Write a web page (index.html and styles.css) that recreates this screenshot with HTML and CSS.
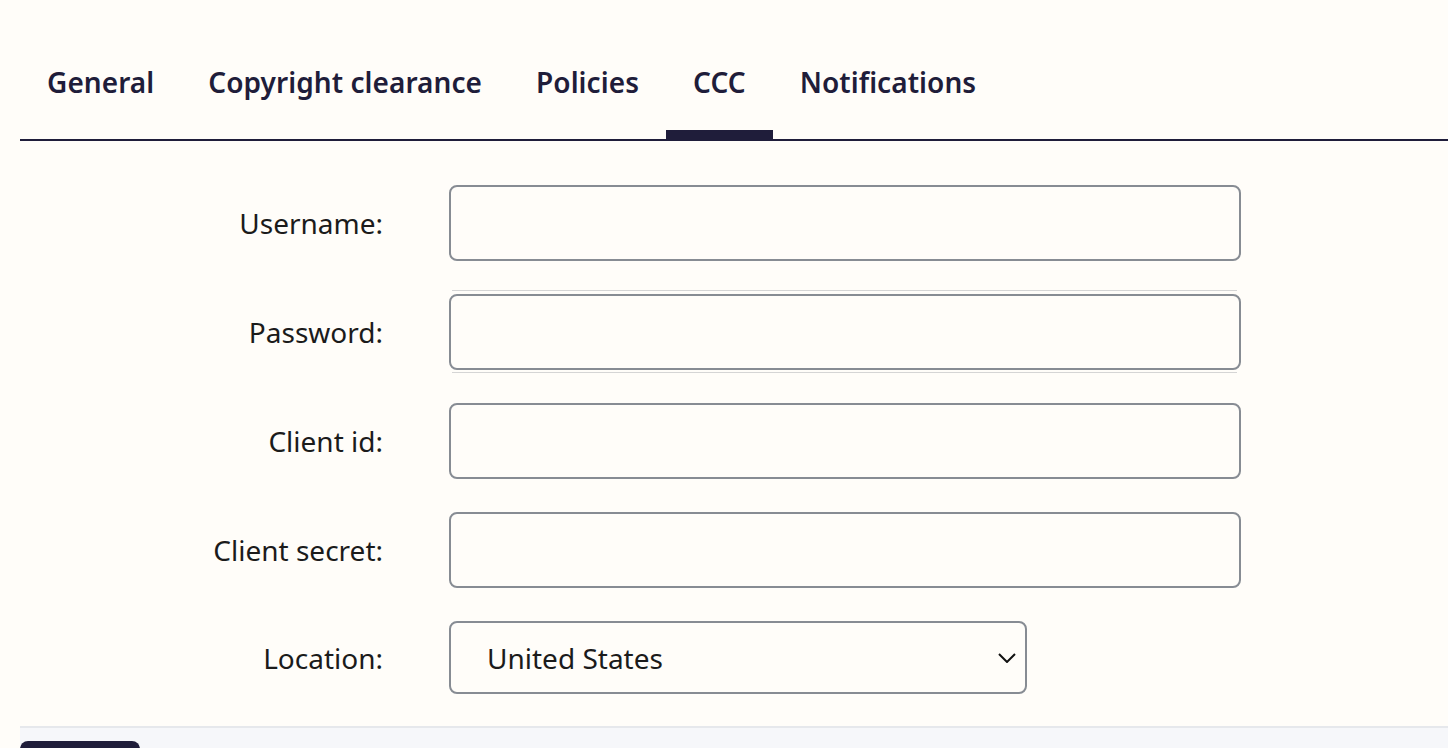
FILE: index.html
```html
<!DOCTYPE html>
<html lang="en">
<head>
<meta charset="utf-8">
<link rel="stylesheet" href="styles.css">
</head>
<body>
<div class="page">
  <nav class="tabs">
    <a class="tab">General</a>
    <a class="tab">Copyright clearance</a>
    <a class="tab">Policies</a>
    <a class="tab active">CCC</a>
    <a class="tab">Notifications</a>
  </nav>
  <form class="form">
    <div class="row">
      <label class="label">Username:</label>
      <div class="field"><input class="input" type="text"></div>
    </div>
    <div class="row">
      <label class="label">Password:</label>
      <div class="field pw"><input class="input" type="password"></div>
    </div>
    <div class="row">
      <label class="label">Client id:</label>
      <div class="field"><input class="input" type="text"></div>
    </div>
    <div class="row">
      <label class="label">Client secret:</label>
      <div class="field"><input class="input" type="text"></div>
    </div>
    <div class="row">
      <label class="label">Location:</label>
      <div class="select">
        <span class="select-text">United States</span>
        <svg class="chev" width="18" height="10" viewBox="0 0 18 10"><path d="M1 1l8 8 8-8" fill="none" stroke="#111" stroke-width="2"/></svg>
      </div>
    </div>
  </form>
  <div class="footer">
    <div class="btn"></div>
  </div>
</div>
</body>
</html>
```
FILE: styles.css
```css
html, body {
  margin: 0;
  padding: 0;
  background: #fffdf9;
  height: 100%;
  overflow: hidden;
}
body {
  font-family: "Noto Sans", "Open Sans", sans-serif;
  color: #1b1b1b;
}
.page {
  padding: 0 0 0 20px;
}
.tabs {
  display: flex;
  padding-top: 52px;
  border-bottom: 2px solid #1f1d3a;
}
.tab {
  font-weight: 600;
  font-size: 28px;
  line-height: 38px;
  letter-spacing: 0.06px;
  color: #1f1d3a;
  padding: 11px 27px 29px;
  border-bottom: 9px solid transparent;
}
.tab.active {
  border-bottom-color: #1f1d3a;
}
.form {
  display: flex;
  flex-direction: column;
  gap: 33px;
  padding-top: 44px;
}
.row {
  display: flex;
  align-items: center;
}
.label {
  width: 363px;
  text-align: right;
  font-size: 28px;
  color: #1b1b1b;
  padding-right: 66px;
}
.field {
  width: 792px;
}
.input {
  display: block;
  box-sizing: border-box;
  width: 792px;
  height: 76px;
  border: 2px solid #878c93;
  border-radius: 8px;
  background: #fffdf9;
  margin: 0;
  padding: 0 36px;
  font: inherit;
}
.pw {
  position: relative;
}
.pw::before, .pw::after {
  content: "";
  position: absolute;
  left: 3px;
  right: 4px;
  height: 1px;
  background: #d5d5d5;
}
.pw::before { top: -4px; }
.pw::after { bottom: -3px; }
.select {
  box-sizing: border-box;
  width: 578px;
  height: 73px;
  border: 2px solid #878c93;
  border-radius: 8px;
  display: flex;
  align-items: center;
  justify-content: space-between;
  padding: 0 9px 0 36px;
}
.select-text {
  font-size: 28px;
  color: #1b1b1b;
}
.chev {
  display: block;
}
.footer {
  margin-top: 32px;
  border-top: 2px solid #e6e8ec;
  background: #f6f7fa;
  height: 40px;
  padding-top: 13px;
}
.btn {
  width: 120px;
  height: 30px;
  background: #1f1d3a;
  border-radius: 8px 8px 0 0;
}
```
